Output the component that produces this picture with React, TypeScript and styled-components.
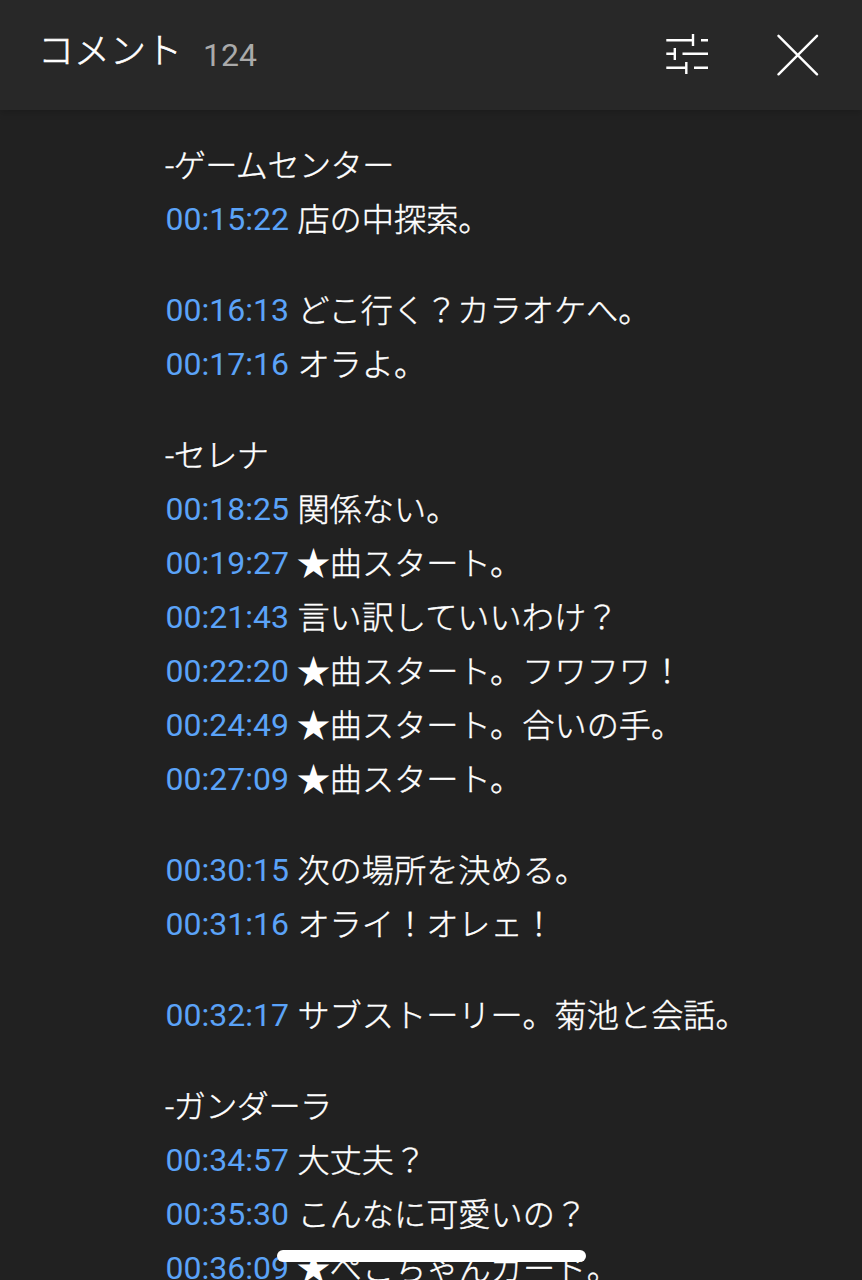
import React from "react";
import styled, { createGlobalStyle } from "styled-components";

const GlobalStyle = createGlobalStyle`
  * { box-sizing: border-box; }
  body { margin: 0; background: #212121; overflow: hidden; }
`;

const Screen = styled.div`
  position: relative;
  display: flex;
  flex-direction: column;
  width: 862px;
  height: 1280px;
  overflow: hidden;
  background: #212121;
  color: #fff;
  font-family: Roboto, "Noto Sans CJK JP", sans-serif;
`;

const Header = styled.header`
  display: flex;
  align-items: center;
  flex: none;
  height: 110px;
  padding: 0 43px 0 38px;
  background: #282828;
  box-shadow: 0 2px 8px rgba(0, 0, 0, 0.2);
`;

const Title = styled.h1`
  margin: 0;
  padding-bottom: 6px;
  font-size: 36px;
  font-weight: 300;
  line-height: 50px;
  -webkit-text-stroke: 0.6px currentColor;
`;

const Count = styled.span`
  margin-left: 21px;
  color: #aaa;
  font-size: 32px;
  line-height: 50px;
`;

const Actions = styled.div`
  display: flex;
  align-items: center;
  gap: 68px;
  margin-left: auto;
`;

const IconButton = styled.button`
  display: flex;
  padding: 0;
  border: 0;
  background: none;
  color: #fff;
`;

const Comment = styled.main`
  padding: 28px 0 0 165px;
`;

const Section = styled.section`
  margin-bottom: 37px;
`;

const Line = styled.p<{ $heading: boolean }>`
  display: flex;
  align-items: center;
  height: 54px;
  margin: 0;
  font-size: 32.2px;
  font-weight: 300;
  letter-spacing: ${(p) => (p.$heading ? "-0.6px" : "0")};
  line-height: 54px;
  white-space: pre;
`;

const Text = styled.span`
  padding-top: 1px;
  -webkit-text-stroke: 0.4px currentColor;
`;

const Star = styled.span`
  width: 32.4px;
  padding-top: 1px;
  font-size: 34px;
  text-indent: -0.8px;
`;

const Time = styled.a`
  width: 132.4px;
  padding-left: 0.5px;
  color: #5ba3f8;
  font-size: 32px;
  font-weight: 400;
`;

const HomeIndicator = styled.div`
  position: absolute;
  left: 277px;
  bottom: 18px;
  width: 309px;
  height: 12px;
  border-radius: 6px;
  background: #fff;
`;

type Entry = { time?: string; star?: boolean; text: string };

const sections: Entry[][] = [
  [{ text: "-ゲームセンター" }, { time: "00:15:22", text: "店の中探索。" }],
  [{ time: "00:16:13", text: "どこ行く？カラオケへ。" }, { time: "00:17:16", text: "オラよ。" }],
  [
    { text: "-セレナ" },
    { time: "00:18:25", text: "関係ない。" },
    { time: "00:19:27", star: true, text: "曲スタート。" },
    { time: "00:21:43", text: "言い訳していいわけ？" },
    { time: "00:22:20", star: true, text: "曲スタート。フワフワ！" },
    { time: "00:24:49", star: true, text: "曲スタート。合いの手。" },
    { time: "00:27:09", star: true, text: "曲スタート。" },
  ],
  [{ time: "00:30:15", text: "次の場所を決める。" }, { time: "00:31:16", text: "オライ！オレェ！" }],
  [{ time: "00:32:17", text: "サブストーリー。菊池と会話。" }],
  [
    { text: "-ガンダーラ" },
    { time: "00:34:57", text: "大丈夫？" },
    { time: "00:35:30", text: "こんなに可愛いの？" },
    { time: "00:36:09", star: true, text: "ぺこちゃんガード。" },
  ],
];

export default function App() {
  return (
    <Screen>
      <GlobalStyle />
      <Header>
        <Title>コメント</Title>
        <Count>124</Count>
        <Actions>
          <IconButton aria-label="並べ替え">
            <svg width="44" height="42" viewBox="0 0 44 42" fill="none" stroke="currentColor" strokeWidth="2.4">
              <path d="M1.3 6.3H28M28 0v12M36 6.3h7M1.3 19.8h8.5M9.8 14v12M17.5 19.8H43M1.3 33.8h20M21.3 28v12M29 33.8h14" />
            </svg>
          </IconButton>
          <IconButton aria-label="閉じる">
            <svg width="42" height="42" viewBox="0 0 42 42" fill="none" stroke="currentColor" strokeWidth="2.4" strokeLinecap="round">
              <path d="M1.5 1.8l38.5 38.5M40 1.8L1.5 40.3" />
            </svg>
          </IconButton>
        </Actions>
      </Header>
      <Comment>
        {sections.map((lines, i) => (
          <Section key={i}>
            {lines.map((line, j) => (
              <Line key={j} $heading={!line.time}>
                {line.time && <Time>{line.time}</Time>}
                {line.star && <Star>★</Star>}
                <Text>{line.text}</Text>
              </Line>
            ))}
          </Section>
        ))}
      </Comment>
      <HomeIndicator />
    </Screen>
  );
}
